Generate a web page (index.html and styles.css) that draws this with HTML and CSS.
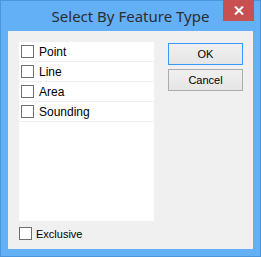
FILE: index.html
```html
<!DOCTYPE html>
<html lang="en">
<head>
  <meta charset="UTF-8">
  <title>Select By Feature Type</title>
  <link rel="stylesheet" href="styles.css">
</head>
<body>
  <div class="window">
    <!-- title bar -->
    <div class="titlebar">
      <span class="title">Select By Feature Type</span>
      <button class="close" aria-label="Close">
        <svg width="10" height="9" viewBox="0 0 10 9">
          <path d="M1 0.5 L9 8.5 M9 0.5 L1 8.5" stroke="#fff" stroke-width="2"/>
        </svg>
      </button>
    </div>

    <!-- client area -->
    <div class="client">
      <div class="main">
        <ul class="list">
          <li><span class="check"></span>Point</li>
          <li><span class="check"></span>Line</li>
          <li><span class="check"></span>Area</li>
          <li><span class="check"></span>Sounding</li>
        </ul>
        <div class="buttons">
          <button class="btn default">OK</button>
          <button class="btn">Cancel</button>
        </div>
      </div>
      <label class="exclusive"><span class="check"></span>Exclusive</label>
    </div>
  </div>
</body>
</html>
```

FILE: styles.css
```css
/* page */
body {
  margin: 0;
  padding: 0;
  background: #fff;
}

/* dialog frame */
.window {
  position: relative;
  width: 261px;
  height: 257px;
  box-sizing: border-box;
  border: 1px solid #4b95dc;
  background: #64b0f7;
  display: flex;
  flex-direction: column;
}

.titlebar {
  height: 30px;
  display: flex;
  align-items: center;
  justify-content: center;
}
.title {
  font-family: "Noto Sans", sans-serif;
  font-size: 15px;
  color: #2d2d2d;
  margin-top: -1px;
}
.close {
  position: absolute;
  top: -1px;
  right: 6px;
  width: 31px;
  height: 21px;
  border: none;
  padding: 0;
  background: #c75050;
  display: flex;
  align-items: center;
  justify-content: center;
}

/* client area */
.client {
  margin: 0 7px 7px 7px;
  flex: 1;
  background: #f0f0f0;
  padding: 11px 0 0 11px;
  display: flex;
  flex-direction: column;
  gap: 6px;
}
.main {
  display: flex;
  gap: 14px;
}

/* check list */
.list {
  list-style: none;
  margin: 0;
  padding: 0;
  width: 135px;
  height: 179px;
  background: #fff;
}
.list li {
  height: 19px;
  border-bottom: 1px solid #f0f0f0;
  display: flex;
  align-items: center;
  gap: 5px;
  padding-left: 2px;
  font-family: "Liberation Sans", sans-serif;
  font-size: 12px;
  color: #000;
}
.check {
  width: 13px;
  height: 13px;
  box-sizing: border-box;
  border: 1px solid #707070;
  background: #fff;
  flex: none;
}

/* buttons */
.buttons {
  padding-top: 1px;
  display: flex;
  flex-direction: column;
  gap: 4px;
}
.btn {
  width: 75px;
  height: 22px;
  box-sizing: border-box;
  border: 1px solid #acacac;
  background: linear-gradient(#f0f0f0, #e5e5e5);
  font-family: "Liberation Sans", sans-serif;
  font-size: 11px;
  color: #000;
  padding: 0;
}
.btn.default {
  border-color: #3399ff;
}

/* exclusive option */
.exclusive {
  display: flex;
  align-items: center;
  gap: 4px;
  font-family: "Liberation Sans", sans-serif;
  font-size: 11px;
  color: #000;
}
```
